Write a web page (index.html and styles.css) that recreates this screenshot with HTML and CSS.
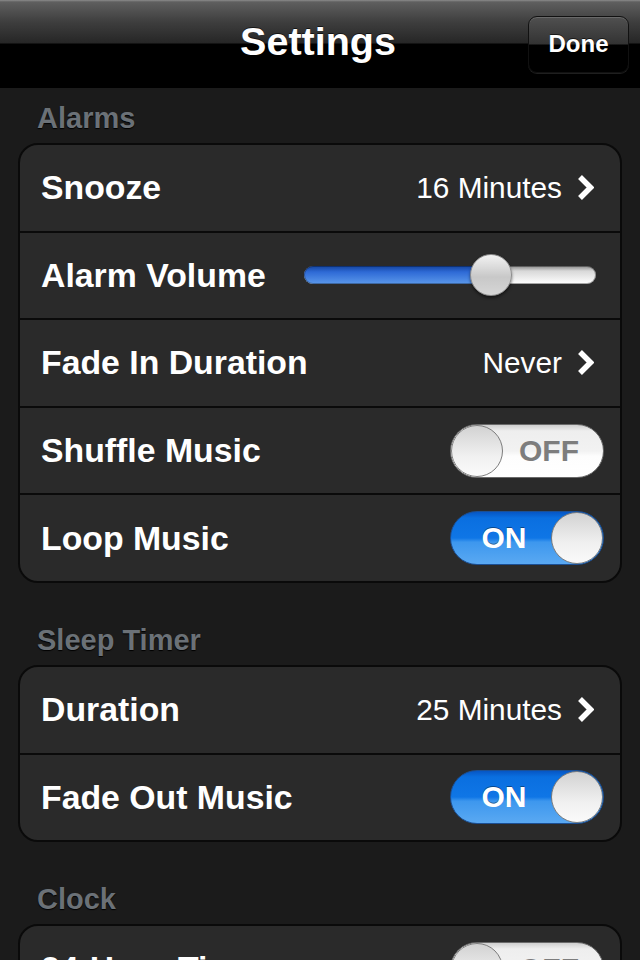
FILE: index.html
```html
<!DOCTYPE html>
<html lang="en">
<head>
    <meta charset="UTF-8">
    <meta name="viewport" content="width=device-width, initial-scale=1.0">
    <title>Settings</title>
    <link rel="stylesheet" href="styles.css">
</head>
<body>
    <header class="navbar">
        <span></span>
        <h1>Settings</h1>
        <button class="done-btn">Done</button>
    </header>

    <main class="content">
        <h2 class="section-title">Alarms</h2>
        <div class="group">
            <div class="row">
                <span class="label">Snooze</span>
                <span class="value">16 Minutes</span>
                <svg class="chevron" width="17" height="27" viewBox="0 0 17 27"><path d="M3 3 L13.5 13.5 L3 24" fill="none" stroke="#fff" stroke-width="5.5"/></svg>
            </div>
            <div class="row">
                <span class="label">Alarm Volume</span>
                <div class="slider">
                    <div class="slider-fill" style="width: 64%;"></div>
                    <div class="slider-knob" style="left: 64%;"></div>
                </div>
            </div>
            <div class="row">
                <span class="label">Fade In Duration</span>
                <span class="value">Never</span>
                <svg class="chevron" width="17" height="27" viewBox="0 0 17 27"><path d="M3 3 L13.5 13.5 L3 24" fill="none" stroke="#fff" stroke-width="5.5"/></svg>
            </div>
            <div class="row">
                <span class="label">Shuffle Music</span>
                <div class="switch off"><span class="knob"></span><span class="switch-text">OFF</span></div>
            </div>
            <div class="row">
                <span class="label">Loop Music</span>
                <div class="switch on"><span class="switch-text">ON</span><span class="knob"></span></div>
            </div>
        </div>

        <h2 class="section-title">Sleep Timer</h2>
        <div class="group">
            <div class="row">
                <span class="label">Duration</span>
                <span class="value">25 Minutes</span>
                <svg class="chevron" width="17" height="27" viewBox="0 0 17 27"><path d="M3 3 L13.5 13.5 L3 24" fill="none" stroke="#fff" stroke-width="5.5"/></svg>
            </div>
            <div class="row">
                <span class="label">Fade Out Music</span>
                <div class="switch on"><span class="switch-text">ON</span><span class="knob"></span></div>
            </div>
        </div>

        <h2 class="section-title">Clock</h2>
        <div class="group">
            <div class="row">
                <span class="label">24-Hour Time</span>
                <div class="switch off"><span class="knob"></span><span class="switch-text">OFF</span></div>
            </div>
        </div>
    </main>
</body>
</html>
```

FILE: styles.css
```css
body {
    margin: 0;
    padding: 0;
    height: 960px;
    overflow: hidden;
    background-color: #1b1b1b;
    font-family: "Liberation Sans", Arial, sans-serif;
    color: #fff;
}
.navbar {
    display: grid;
    grid-template-columns: 1fr auto 1fr;
    align-items: center;
    height: 88px;
    background: linear-gradient(#8c8c8c 0, #5f5f5f 2px, #3e3e3e 22px, #262626 43px, #000 44px, #000 100%);
}
.navbar h1 {
    margin: 0 4px 6px 0;
    font-size: 39.5px;
    font-weight: bold;
    text-shadow: 0 -1px 0 rgba(0, 0, 0, 0.6);
}
.done-btn {
    justify-self: end;
    margin-right: 11px;
    width: 101px;
    height: 57px;
    padding: 0;
    border: 1px solid #111;
    border-radius: 9px;
    background: linear-gradient(#505050 0, #333 27px, #000 28px, #000 100%);
    box-shadow: inset 0 1px 0 rgba(255, 255, 255, 0.15), 0 1px 0 rgba(255, 255, 255, 0.12);
    color: #fff;
    font-family: "Liberation Sans", Arial, sans-serif;
    font-size: 24px;
    font-weight: bold;
    text-shadow: 0 -1px 0 rgba(0, 0, 0, 0.6);
}
.content {
    padding-top: 13px;
}
.section-title {
    margin: 0 0 8px 37px;
    font-size: 29px;
    line-height: 34px;
    font-weight: bold;
    color: #6b7177;
    text-shadow: 0 1px 1px #000;
}
.group {
    margin: 0 18px 40px;
    background-color: #2a2a2a;
    border: 2px solid #0a0a0a;
    border-radius: 20px;
    overflow: hidden;
}
.row {
    display: flex;
    align-items: center;
    height: 85.6px;
    padding: 0 16px 0 21px;
}
.row + .row {
    border-top: 2px solid #0a0a0a;
}
.label {
    flex: 1;
    font-size: 33.8px;
    font-weight: bold;
    white-space: nowrap;
}
.value {
    font-size: 29.8px;
    color: #fff;
}
.chevron {
    margin: 0 10px 0 15px;
}
.slider {
    position: relative;
    width: 292px;
    height: 18px;
    margin-right: 8px;
    border-radius: 9px;
    background: linear-gradient(#8a8a8a 0, #d8d8d8 5px, #fff 100%);
    box-shadow: inset 0 0 0 1px rgba(0, 0, 0, 0.35);
}
.slider-fill {
    height: 100%;
    border-radius: 9px 0 0 9px;
    background: linear-gradient(#14449f 0, #2e6ad6 6px, #5b98ea 100%);
    box-shadow: inset 0 0 0 1px rgba(0, 0, 0, 0.3);
}
.slider-knob {
    position: absolute;
    top: -12px;
    width: 40px;
    height: 40px;
    margin-left: -21px;
    border: 1px solid #8d8d8d;
    border-radius: 50%;
    background: linear-gradient(#f2f2f2, #c8c8c8 55%, #d6d6d6);
    box-shadow: 0 2px 3px rgba(0, 0, 0, 0.5);
}
.switch {
    display: flex;
    align-items: center;
    box-sizing: border-box;
    width: 154px;
    height: 54px;
    border-radius: 27px;
    border: 1px solid #6a6a6a;
    overflow: hidden;
}
.switch.off {
    background: linear-gradient(#cfcfcf 0, #eeeeee 6px, #f2f2f2 50%, #fdfdfd 60%, #fff 100%);
}
.switch.on {
    border-color: #1b4f94;
    background: linear-gradient(#0656c4 0, #0a6fe0 6px, #0f76e6 50%, #3d97ee 58%, #5aa9f2 100%);
}
.switch .knob {
    flex: none;
    box-sizing: border-box;
    width: 52px;
    height: 52px;
    border: 1px solid #7c7c7c;
    border-radius: 50%;
    background: linear-gradient(#d2d2d2, #f0f0f0 60%, #fafafa);
}
.switch-text {
    flex: 1;
    text-align: center;
    font-size: 30px;
    font-weight: bold;
}
.switch.off .switch-text {
    color: #7d7d7d;
    padding-right: 8px;
}
.switch.on .switch-text {
    color: #fff;
    padding-left: 6px;
    text-shadow: 0 -1px 0 rgba(0, 0, 0, 0.4);
}
```
